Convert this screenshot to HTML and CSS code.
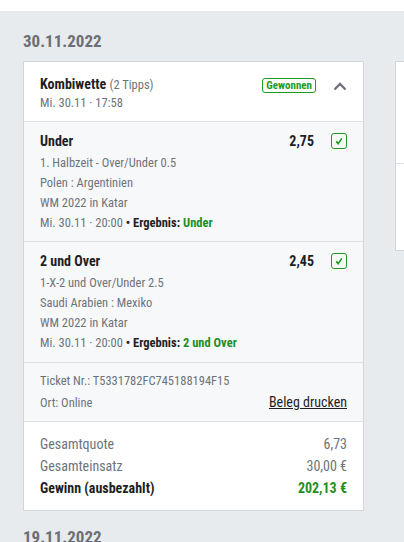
FILE: index.html
```html
<!DOCTYPE html>
<html>
<head>
    <title>Wettverlauf</title>
    <link rel="stylesheet" href="styles.css">
</head>
<body>
    <div class="topbar"></div>
    <div class="page">
        <div class="day">
            <h2 class="day-title">30.11.2022</h2>
            <div class="cards">
                <div class="card">
                    <div class="card-head">
                        <div>
                            <div class="bet-type">Kombiwette <span class="tips">(2 Tipps)</span></div>
                            <div class="muted">Mi. 30.11 · 17:58</div>
                        </div>
                        <div class="head-right">
                            <span class="badge">Gewonnen</span>
                            <svg class="chevron" width="14" height="9" viewBox="0 0 14 9">
                                <path d="M1.5 7.5 L7 2 L12.5 7.5" fill="none" stroke="#6f747b" stroke-width="2.4"/>
                            </svg>
                        </div>
                    </div>

                    <div class="tip">
                        <div class="tip-top">
                            <span class="tip-name">Under</span>
                            <span class="tip-odds">2,75</span>
                            <span class="check">
                                <svg width="10" height="10" viewBox="0 0 10 10"><path d="M2.2 5.4 L4.2 7.6 L7.8 2.4" fill="none" stroke="#1e9a1e" stroke-width="1.6"/></svg>
                            </span>
                        </div>
                        <div class="muted line">1. Halbzeit - Over/Under 0.5</div>
                        <div class="muted line">Polen : Argentinien</div>
                        <div class="muted line">WM 2022 in Katar</div>
                        <div class="muted line">Mi. 30.11 · 20:00 <span class="result">• Ergebnis: <span class="won">Under</span></span></div>
                    </div>

                    <div class="tip">
                        <div class="tip-top">
                            <span class="tip-name">2 und Over</span>
                            <span class="tip-odds">2,45</span>
                            <span class="check">
                                <svg width="10" height="10" viewBox="0 0 10 10"><path d="M2.2 5.4 L4.2 7.6 L7.8 2.4" fill="none" stroke="#1e9a1e" stroke-width="1.6"/></svg>
                            </span>
                        </div>
                        <div class="muted line">1-X-2 und Over/Under 2.5</div>
                        <div class="muted line">Saudi Arabien : Mexiko</div>
                        <div class="muted line">WM 2022 in Katar</div>
                        <div class="muted line">Mi. 30.11 · 20:00 <span class="result">• Ergebnis: <span class="won">2 und Over</span></span></div>
                    </div>

                    <div class="ticket">
                        <div class="muted line">Ticket Nr.: T5331782FC745188194F15</div>
                        <div class="ticket-row">
                            <span class="muted">Ort: Online</span>
                            <a class="print" href="#">Beleg drucken</a>
                        </div>
                    </div>

                    <div class="totals">
                        <div class="total-row"><span>Gesamtquote</span><span>6,73</span></div>
                        <div class="total-row"><span>Gesamteinsatz</span><span>30,00 €</span></div>
                        <div class="total-row payout"><span>Gewinn (ausbezahlt)</span><span class="won">202,13 €</span></div>
                    </div>
                </div>

                <div class="card card-next">
                    <div class="next-top"></div>
                    <div class="next-bottom"></div>
                </div>
            </div>
        </div>

        <div class="day">
            <h2 class="day-title">19.11.2022</h2>
        </div>
    </div>
</body>
</html>
```

FILE: styles.css
```css
body {
    margin: 0;
    padding: 0;
    background-color: #e8ebee;
    font-family: "Liberation Sans Narrow", "Roboto Condensed", "DejaVu Sans Condensed", "Liberation Sans", sans-serif;
    color: #1d1f24;
    overflow: hidden;
}
.topbar {
    height: 11px;
    background-color: #ffffff;
}
.page {
    padding: 20px 0 0 23px;
}
.day-title {
    margin: 0 0 10px 0;
    font-size: 17px;
    font-weight: bold;
    color: #6b6f75;
    line-height: 20px;
}
.cards {
    display: flex;
    gap: 31px;
    align-items: flex-start;
}
.card {
    width: 339px;
    flex-shrink: 0;
    background-color: #ffffff;
    border: 1px solid #d3d7dc;
}
.card-head {
    display: flex;
    justify-content: space-between;
    padding: 12px 16px 11px 16px;
    border-bottom: 1px solid #dde0e4;
}
.bet-type {
    font-size: 14px;
    font-weight: bold;
    line-height: 20px;
}
.tips {
    font-weight: normal;
    color: #6e737a;
    font-size: 12.5px;
}
.muted {
    color: #6e737a;
    font-size: 12.5px;
}
.head-right {
    display: flex;
    align-items: flex-start;
    gap: 17px;
    padding-top: 4px;
}
.badge {
    border: 1px solid #1e9a1e;
    border-radius: 3px;
    color: #1e9a1e;
    font-size: 11px;
    font-weight: bold;
    padding: 0 3px;
    line-height: 13px;
}
.chevron {
    margin-top: 4px;
}
.tip {
    background-color: #f7f8fa;
    padding: 9px 16px 8px 16px;
    border-bottom: 1px solid #dde0e4;
}
.tip + .tip {
    padding-bottom: 9px;
}
.tip-top {
    display: flex;
    align-items: center;
    margin-bottom: 2px;
}
.tip-name {
    flex: 1;
    font-size: 14px;
    font-weight: bold;
    line-height: 20px;
}
.tip-odds {
    font-size: 14px;
    font-weight: bold;
}
.check {
    margin-left: 17px;
    width: 14px;
    height: 14px;
    border: 1px solid #1e9a1e;
    border-radius: 3px;
    display: flex;
    align-items: center;
    justify-content: center;
}
.line {
    line-height: 20px;
}
.result {
    color: #1d1f24;
    font-weight: bold;
}
.won {
    color: #1e8f1e;
    font-weight: bold;
}
.ticket {
    background-color: #f7f8fa;
    padding: 8px 16px 7px 16px;
    border-bottom: 1px solid #dde0e4;
}
.ticket-row {
    display: flex;
    justify-content: space-between;
    align-items: baseline;
    line-height: 22px;
}
.print {
    color: #1d1f24;
    font-size: 14px;
    text-decoration: underline;
}
.totals {
    padding: 11px 16px 11px 16px;
}
.total-row {
    display: flex;
    justify-content: space-between;
    font-size: 14px;
    line-height: 22px;
    color: #6e737a;
}
.payout {
    color: #1d1f24;
    font-weight: bold;
}
.card-next {
    height: 188px;
}
.next-top {
    height: 101px;
    border-bottom: 1px solid #dde0e4;
}
.day + .day {
    margin-top: 16px;
}
```
